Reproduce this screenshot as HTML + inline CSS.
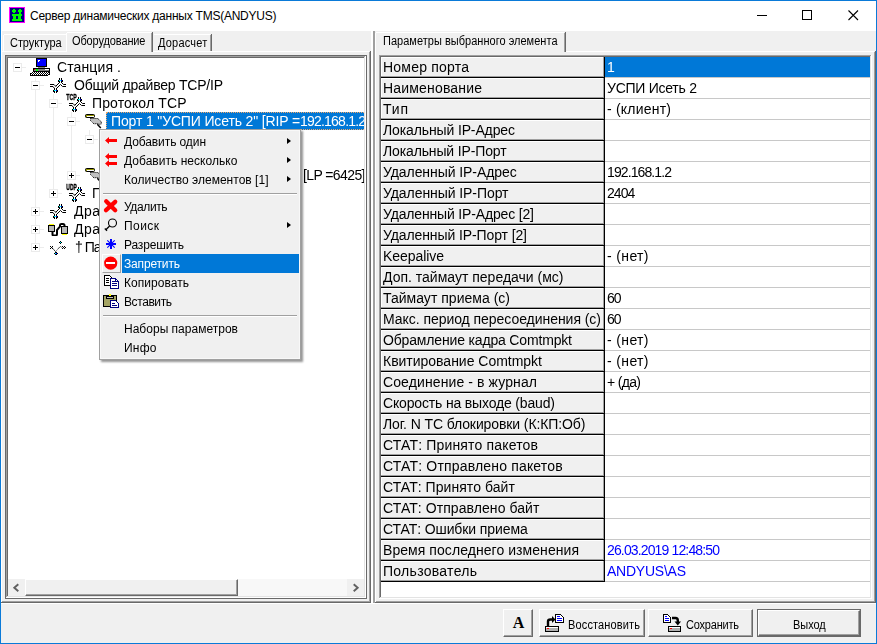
<!DOCTYPE html>
<html lang="ru"><head><meta charset="utf-8"><title>Сервер динамических данных TMS(ANDYUS)</title>
<style>
*{box-sizing:border-box;margin:0;padding:0}
html,body{width:877px;height:644px;overflow:hidden;background:#f0f0f0}
body{position:relative;font-family:"Liberation Sans",sans-serif;font-size:14px;color:#000}
#win, #win div, #win svg, #win span.a{position:absolute}
#win{left:0;top:0;width:877px;height:644px;background:#f0f0f0;overflow:hidden}
#frame{left:0;top:0;width:877px;height:644px;border:1px solid #0a7ad8;z-index:50}
#title{left:1px;top:1px;width:875px;height:30px;background:#fff}
#title .t{left:29px;top:7px;font-size:12px;line-height:16px;white-space:nowrap}
.v{background:#696969}.g{background:#a0a0a0}.w{background:#fff}.l{background:#e3e3e3}
/* tabs */
.tab{font-size:11px;line-height:13px;white-space:nowrap;height:13px}
.tab span{will-change:transform;display:inline-block;transform:scaleY(1.15);transform-origin:0 100%}
/* tree */
.tr{will-change:transform;font-size:14px;line-height:18px;height:18px;white-space:nowrap}
.pm{width:9px;height:9px;border:1px solid #ebebeb;background:#fff}
.pm i{position:absolute;left:1px;top:3px;width:5px;height:1px;background:#000}
.pm b{position:absolute;left:3px;top:1px;width:1px;height:5px;background:#000}
.ln{background:#ececec}
/* grid */
.nc{left:381px;width:224px;height:21px;white-space:nowrap;overflow:hidden;background:linear-gradient(#000,#000) right/1px 100% no-repeat,linear-gradient(#000,#000) bottom/100% 1px no-repeat,linear-gradient(#a0a0a0,#a0a0a0) right 1px top 0/1px calc(100% - 1px) no-repeat,linear-gradient(#a0a0a0,#a0a0a0) left 0 bottom 1px/calc(100% - 1px) 1px no-repeat,linear-gradient(#fff,#fff) top/100% 1px no-repeat,linear-gradient(#fff,#fff) left/1px 100% no-repeat,#f0f0f0}
.nc span{will-change:transform;position:absolute;left:2px;top:0;line-height:20px}
.vc{left:605px;width:265px;height:21px;background:#fff;border-bottom:1px solid #c8c8c8;white-space:nowrap;overflow:hidden}
.vc span{will-change:transform;position:absolute;left:2px;top:0;line-height:20px}
.vc.sel{background:#0078d7;color:#fff}
.vc.bl{color:#0000ff}
/* menu */
#menu{left:99px;top:129px;width:202px;height:231px;background:#f0f0f0;border:1px solid #a0a0a0;box-shadow:2px 2px 2px rgba(0,0,0,.42),inset 0 0 0 1px #f8f8f8;font-size:12px}
.mi{left:24px;height:19px;line-height:21px;white-space:nowrap}
.sep{left:3px;width:194px;height:2px;background:#a0a0a0;border-bottom:1px solid #fff}
.arr{left:187px;width:0;height:0;border-left:4px solid #000;border-top:3.5px solid transparent;border-bottom:3.5px solid transparent;margin-top:-0.5px}
/* buttons */
.btn{top:609px;height:28px;background:#f0f0f0;border-top:1px solid #fff;border-left:1px solid #fff;border-right:1px solid #696969;border-bottom:1px solid #696969;font-size:11px;line-height:13px;white-space:nowrap}
.btn:after{content:"";position:absolute;right:0;bottom:0;left:0;top:0;border-right:1px solid #a0a0a0;border-bottom:1px solid #a0a0a0}
.btn>span{will-change:transform;position:absolute;top:9px;display:inline-block;transform:scaleY(1.15);transform-origin:0 100%}
</style></head><body>
<div id="win">
<div id="title"><div class="t"><span style="letter-spacing:-0.239px">Сервер динамических данных TMS(ANDYUS)</span></div>
<svg style="left:8px;top:6px" width="16" height="16" viewBox="0 0 16 16" shape-rendering="crispEdges"><rect width="16" height="16" fill="#ff00ff"/><rect x="1" y="1" width="14" height="14" fill="#000080"/><path d="M4 2h2v4h-2zM3 3h4v2h-4zM10 2h2v4h-2zM9 3h4v2h-4zM10 6h2v1h-2zM3 7h10v2h-10zM4 9h3v3h-3zM9 9h3v3h-3zM3 12h10v2h-10z" fill="#00ff00"/></svg>
<svg style="left:756px;top:9px" width="110" height="12" viewBox="0 0 110 12"><path d="M0 5.5h10M45.5 0.5h9v9h-9z" stroke="#000" stroke-width="1" fill="none" shape-rendering="crispEdges"/><path d="M91.5 0.5l9.5 9.5M101 0.5l-9.5 9.5" stroke="#000" stroke-width="1.1" fill="none"/></svg>
</div>

<!-- left tab control -->
<div class="w" style="left:1px;top:31px;width:1px;height:572px"></div>
<div class="w" style="left:2px;top:51px;width:367px;height:1px"></div>
<div class="g" style="left:369px;top:52px;width:1px;height:550px"></div>
<div class="v" style="left:370px;top:51px;width:1px;height:552px"></div>
<div class="g" style="left:2px;top:601px;width:368px;height:1px"></div>
<div class="v" style="left:1px;top:602px;width:370px;height:1px"></div>
<!-- tabs -->
<div class="w" style="left:3px;top:35px;width:1px;height:16px"></div>
<div class="w" style="left:4px;top:34px;width:62px;height:1px"></div>
<div class="tab" style="left:9.5px;top:37px"><span style="letter-spacing:-0.061px">Структура</span></div>
<div class="w" style="left:154px;top:34px;width:56px;height:1px"></div>
<div class="g" style="left:210px;top:35px;width:1px;height:16px"></div>
<div class="v" style="left:211px;top:34px;width:1px;height:17px"></div>
<div class="tab" style="left:158px;top:37px"><span style="letter-spacing:0.196px">Дорасчет</span></div>
<div style="left:66px;top:32px;width:87px;height:20px;background:#f0f0f0"></div>
<div class="w" style="left:66px;top:33px;width:1px;height:19px"></div>
<div class="w" style="left:67px;top:32px;width:84px;height:1px"></div>
<div class="g" style="left:151px;top:33px;width:1px;height:19px"></div>
<div class="v" style="left:152px;top:32px;width:1px;height:20px"></div>
<div class="tab" style="left:72px;top:34.5px"><span style="letter-spacing:-0.121px">Оборудование</span></div>

<!-- tree frame -->
<div style="left:5px;top:55px;width:362px;height:544px;border:1px solid #696969;background:#fff"></div>
<div class="g" style="left:6px;top:56px;width:359px;height:1px"></div>
<div class="g" style="left:6px;top:56px;width:1px;height:541px"></div>
<div class="v" style="left:7px;top:57px;width:357px;height:1px"></div>
<div class="v" style="left:7px;top:57px;width:1px;height:539px"></div>
<div class="l" style="left:364px;top:57px;width:1px;height:540px"></div>
<div class="l" style="left:7px;top:596px;width:358px;height:1px"></div>
<!-- tree content (clipped) -->
<div id="tree" style="left:0;top:0;width:364px;height:579px;overflow:hidden">
<div class="ln" style="left:35px;top:77px;width:1px;height:171px"></div>
<div class="ln" style="left:53px;top:94px;width:1px;height:100px"></div>
<div class="ln" style="left:71px;top:112px;width:1px;height:64px"></div>
<div class="ln" style="left:89px;top:130px;width:1px;height:10px"></div>
<div class="pm" style="left:13px;top:63px"><i></i></div><div class="ln" style="left:22px;top:67px;width:4px;height:1px"></div>
<svg style="left:30px;top:58px" width="20" height="18" viewBox="0 0 20 18" shape-rendering="crispEdges"><rect x="6" y="0" width="11" height="9" fill="#000"/><rect x="7" y="1" width="9" height="7" fill="#0000ff"/><path d="M8 2h2v1h-1v1h-1z" fill="#fff"/><rect x="8" y="9" width="7" height="1" fill="#808080"/><rect x="3" y="10" width="17" height="4" fill="#000"/><rect x="4" y="11" width="15" height="2" fill="#808080"/><rect x="4" y="11" width="1" height="1" fill="#ff0000"/><rect x="6" y="11" width="2" height="2" fill="#00ff00"/><rect x="15" y="11" width="4" height="1" fill="#fff"/><rect x="0" y="14" width="20" height="4" fill="#000"/><path d="M2 15h1v1h-1zM4 15h1v1h-1zM6 15h1v1h-1zM8 15h1v1h-1zM10 15h1v1h-1zM12 15h1v1h-1zM14 15h1v1h-1zM16 15h1v1h-1zM18 15h1v1h-1zM1 16h1v1h-1zM3 16h1v1h-1zM5 16h1v1h-1zM7 16h1v1h-1zM9 16h1v1h-1zM11 16h1v1h-1zM13 16h1v1h-1zM15 16h1v1h-1zM17 16h1v1h-1zM3 14h1v1h-1zM5 14h1v1h-1zM7 14h1v1h-1zM9 14h1v1h-1zM11 14h1v1h-1zM13 14h1v1h-1zM15 14h1v1h-1zM17 14h1v1h-1z" fill="#fff"/><path d="M0 14h2v1h-2zM18 17h2v1h-2z" fill="#fff"/></svg>
<div class="tr" style="left:56.8px;top:58px;"><span style="letter-spacing:0.113px">Станция .</span></div>
<div class="pm" style="left:31px;top:81px"><i></i></div><div class="ln" style="left:40px;top:85px;width:4px;height:1px"></div>
<svg style="left:50px;top:78px" width="16" height="16" viewBox="0 0 16 16"><path d="M0 6.5H4L6 8.5M0 8.5H3L4.5 10.5M5.5 8.5L9.5 4.5M6.5 10.5L10.5 6.5L12.5 8.5H16M12 5L13.5 6.5H16" stroke="#000" stroke-width="1" fill="none"/><g shape-rendering="crispEdges"><path d="M9 0h1v5h-1zM11 0h1v5h-1zM8 2h1v2h-1zM12 2h1v2h-1zM4 10h1v5h-1zM6 10h1v5h-1zM3 12h1v2h-1zM7 12h1v2h-1z" fill="#000"/><rect x="9" y="2" width="2" height="1" fill="#00ffff"/><rect x="11" y="2" width="1" height="1" fill="#0000ff"/><rect x="4" y="12" width="2" height="1" fill="#00ffff"/><rect x="6" y="12" width="1" height="1" fill="#0000ff"/></g></svg>
<div class="tr" style="left:74.3px;top:76px;"><span style="letter-spacing:-0.231px">Общий драйвер TCP/IP</span></div>
<div class="pm" style="left:49px;top:99px"><i></i></div><div class="ln" style="left:58px;top:103px;width:4px;height:1px"></div>
<svg style="left:69px;top:97px" width="16" height="16" viewBox="0 0 16 16"><path d="M0 6.5H4L6 8.5M0 8.5H3L4.5 10.5M5.5 8.5L9.5 4.5M6.5 10.5L10.5 6.5L12.5 8.5H16M12 5L13.5 6.5H16" stroke="#000" stroke-width="1" fill="none"/><g shape-rendering="crispEdges"><path d="M9 0h1v5h-1zM11 0h1v5h-1zM8 2h1v2h-1zM12 2h1v2h-1zM4 10h1v5h-1zM6 10h1v5h-1zM3 12h1v2h-1zM7 12h1v2h-1z" fill="#000"/><rect x="9" y="2" width="2" height="1" fill="#00ffff"/><rect x="11" y="2" width="1" height="1" fill="#0000ff"/><rect x="4" y="12" width="2" height="1" fill="#00ffff"/><rect x="6" y="12" width="1" height="1" fill="#0000ff"/></g></svg>
<svg style="left:66px;top:93px" width="12" height="8" viewBox="0 0 12 8"><text x="0.3" y="6.6" font-family="Liberation Sans, sans-serif" font-weight="bold" font-size="8.6" textLength="10.5" lengthAdjust="spacingAndGlyphs" fill="#000" stroke="#000" stroke-width="0.35">TCP</text></svg>
<div class="tr" style="left:92px;top:94px;"><span style="letter-spacing:0.119px">Протокол TCP</span></div>
<div class="pm" style="left:67px;top:117px"><i></i></div><div class="ln" style="left:76px;top:121px;width:4px;height:1px"></div>
<svg style="left:84px;top:112px" width="19" height="17" viewBox="0 0 19 17"><rect x="1.5" y="2.5" width="9" height="3" rx="1" fill="#989800" stroke="#000"/><path d="M3 4.5H10" stroke="#fff" shape-rendering="crispEdges"/><path d="M6.5 6.5H13.8L17.3 9.8V12L15.5 12.3L12.5 11.5L10 12L6.500 8.500Z" fill="#c0c0c0" stroke="#000" stroke-width="1" stroke-dasharray="1.1 0.9"/><path d="M13.3 12.3L16.800 16" stroke="#000" stroke-width="1.5"/></svg>
<div style="left:106px;top:112px;width:270px;height:18px;background:#0078d7;border:1px dotted #f0a868"></div>
<div class="tr" style="left:110.5px;top:112px;color:#fff"><span style="letter-spacing:-0.142px">Порт 1 &quot;УСПИ Исеть 2&quot; [RIP =</span><span style="letter-spacing:-0.78px">192.168.1.2]</span></div>
<div class="pm" style="left:85px;top:135px"><i></i></div><div class="ln" style="left:94px;top:139px;width:4px;height:1px"></div>
<div class="pm" style="left:67px;top:171px"><i></i><b></b></div><div class="ln" style="left:76px;top:175px;width:4px;height:1px"></div>
<svg style="left:84px;top:166px" width="19" height="17" viewBox="0 0 19 17"><rect x="1.5" y="2.5" width="9" height="3" rx="1" fill="#989800" stroke="#000"/><path d="M3 4.5H10" stroke="#fff" shape-rendering="crispEdges"/><path d="M6.5 6.5H13.8L17.3 9.8V12L15.5 12.3L12.5 11.5L10 12L6.500 8.500Z" fill="#c0c0c0" stroke="#000" stroke-width="1" stroke-dasharray="1.1 0.9"/><path d="M13.3 12.3L16.800 16" stroke="#000" stroke-width="1.5"/></svg>
<div class="tr" style="left:302.5px;top:166px;"><span style="letter-spacing:-0.597px">[LP =6425]</span></div>
<div class="pm" style="left:49px;top:189px"><i></i><b></b></div><div class="ln" style="left:58px;top:193px;width:4px;height:1px"></div>
<svg style="left:69px;top:187px" width="16" height="16" viewBox="0 0 16 16"><path d="M0 6.5H4L6 8.5M0 8.5H3L4.5 10.5M5.5 8.5L9.5 4.5M6.5 10.5L10.5 6.5L12.5 8.5H16M12 5L13.5 6.5H16" stroke="#000" stroke-width="1" fill="none"/><g shape-rendering="crispEdges"><path d="M9 0h1v5h-1zM11 0h1v5h-1zM8 2h1v2h-1zM12 2h1v2h-1zM4 10h1v5h-1zM6 10h1v5h-1zM3 12h1v2h-1zM7 12h1v2h-1z" fill="#000"/><rect x="9" y="2" width="2" height="1" fill="#00ffff"/><rect x="11" y="2" width="1" height="1" fill="#0000ff"/><rect x="4" y="12" width="2" height="1" fill="#00ffff"/><rect x="6" y="12" width="1" height="1" fill="#0000ff"/></g></svg>
<svg style="left:66px;top:183px" width="12" height="8" viewBox="0 0 12 8"><text x="0.3" y="6.6" font-family="Liberation Sans, sans-serif" font-weight="bold" font-size="8.6" textLength="10.5" lengthAdjust="spacingAndGlyphs" fill="#000" stroke="#000" stroke-width="0.35">UDP</text></svg>
<div class="tr" style="left:92px;top:184px;"><span style="letter-spacing:-0.062px">П</span></div>
<div class="pm" style="left:31px;top:207px"><i></i><b></b></div><div class="ln" style="left:40px;top:211px;width:4px;height:1px"></div>
<svg style="left:50px;top:204px" width="16" height="16" viewBox="0 0 16 16"><path d="M0 6.5H4L6 8.5M0 8.5H3L4.5 10.5M5.5 8.5L9.5 4.5M6.5 10.5L10.5 6.5L12.5 8.5H16M12 5L13.5 6.5H16" stroke="#000" stroke-width="1" fill="none"/><g shape-rendering="crispEdges"><path d="M9 0h1v5h-1zM11 0h1v5h-1zM8 2h1v2h-1zM12 2h1v2h-1zM4 10h1v5h-1zM6 10h1v5h-1zM3 12h1v2h-1zM7 12h1v2h-1z" fill="#000"/><rect x="9" y="2" width="2" height="1" fill="#00ffff"/><rect x="11" y="2" width="1" height="1" fill="#0000ff"/><rect x="4" y="12" width="2" height="1" fill="#00ffff"/><rect x="6" y="12" width="1" height="1" fill="#0000ff"/></g></svg>
<div class="tr" style="left:74px;top:202px;"><span style="letter-spacing:0.469px">Дра</span></div>
<div class="pm" style="left:31px;top:225px"><i></i><b></b></div><div class="ln" style="left:40px;top:229px;width:4px;height:1px"></div>
<svg style="left:48px;top:223px" width="20" height="13" viewBox="0 0 20 13"><path d="M4.5 8V11.5Q4.5 12.5 6 12.5H7.5Q9 12.5 9 11V7L12 3.5V2Q12 1 13.5 1H15Q16.5 1 16.5 2.5V4" stroke="#000" stroke-width="2" fill="none"/><g shape-rendering="crispEdges"><rect x="1" y="1" width="5" height="1" fill="#ffff00"/><rect x="0" y="2" width="7" height="7" fill="#000"/><rect x="1" y="3" width="5" height="5" fill="#b8b8b8"/><rect x="13" y="3" width="7" height="8" fill="#000"/><rect x="14" y="4" width="5" height="6" fill="#b8b8b8"/><rect x="14" y="11" width="5" height="1" fill="#ffff00"/></g></svg>
<div class="tr" style="left:74px;top:220px;"><span style="letter-spacing:0.469px">Дра</span></div>
<div class="pm" style="left:31px;top:243px"><i></i><b></b></div><div class="ln" style="left:40px;top:247px;width:4px;height:1px"></div>
<svg style="left:49px;top:240px" width="18" height="16" viewBox="0 0 18 16"><path d="M3 7.5L6.5 11.7L11.4 6.3L13.8 8.7" stroke="#000" stroke-width="1" stroke-dasharray="1 0.8" fill="none"/><g shape-rendering="crispEdges" fill="#000"><path d="M1 6h1v1h-1zM3 6h1v1h-1zM2 7h1v1h-1zM1 8h1v1h-1zM3 8h1v1h-1zM13 6h1v1h-1zM15 6h1v1h-1zM14 7h1v1h-1zM16 7h1v1h-1zM13 8h1v1h-1zM15 8h1v1h-1zM11 1h1v1h-1zM10 2h1v1h-1zM12 2h1v1h-1zM11 3h1v1h-1zM6 12h1v1h-1zM5 13h1v1h-1zM8 13h1v1h-1zM6 14h1v1h-1zM7 12h1v1h-1zM7 14h1v1h-1z"/><rect x="11" y="2" width="1" height="1" fill="#00ffff"/><rect x="6" y="13" width="1" height="1" fill="#00ffff"/><rect x="7" y="13" width="1" height="1" fill="#0000ff"/></g></svg>
<div class="tr" style="left:75px;top:238px;"><span style="letter-spacing:-1.0px">† Па</span></div>
</div>
<!-- h scrollbar -->
<div style="left:8px;top:579px;width:356px;height:17px;background:#f0f0f0"></div>
<div style="left:238px;top:579px;width:109px;height:17px;background:#f8f8f8"></div>
<div style="left:25px;top:579px;width:213px;height:17px;background:#f0f0f0;border-top:1px solid #fff;border-left:1px solid #fff;border-right:1px solid #696969;border-bottom:1px solid #696969"></div>
<div class="g" style="left:26px;top:594px;width:211px;height:1px"></div>
<div class="g" style="left:236px;top:580px;width:1px;height:15px"></div>
<svg style="left:12px;top:583px" width="8" height="10" viewBox="0 0 8 10"><path d="M6.3 1.3L2.300 4.800l4 3.500" stroke="#606060" stroke-width="1.9" fill="none"/></svg>
<svg style="left:352px;top:583px" width="8" height="10" viewBox="0 0 8 10"><path d="M1.700 1.300L5.700 4.800l-4 3.500" stroke="#606060" stroke-width="1.9" fill="none"/></svg>

<!-- splitter -->
<div class="w" style="left:371px;top:31px;width:2px;height:572px"></div>
<div class="g" style="left:373px;top:31px;width:2px;height:572px"></div>
<!-- right tab control -->
<div class="w" style="left:375px;top:33px;width:1px;height:570px"></div>
<div class="w" style="left:376px;top:51px;width:498px;height:1px"></div>
<div class="g" style="left:874px;top:52px;width:1px;height:550px"></div>
<div class="v" style="left:875px;top:51px;width:1px;height:552px"></div>
<div class="g" style="left:376px;top:601px;width:499px;height:1px"></div>
<div class="v" style="left:375px;top:602px;width:501px;height:1px"></div>
<div style="left:376px;top:32px;width:190px;height:20px;background:#f0f0f0"></div>
<div class="w" style="left:376px;top:32px;width:188px;height:1px"></div>
<div class="g" style="left:564px;top:33px;width:1px;height:19px"></div>
<div class="v" style="left:565px;top:32px;width:1px;height:20px"></div>
<div class="tab" style="left:382.7px;top:34.5px"><span style="letter-spacing:0.022px">Параметры выбранного элемента</span></div>
<!-- grid frame -->
<div style="left:379px;top:55px;width:493px;height:544px;background:#fff"></div>
<div class="g" style="left:379px;top:55px;width:492px;height:1px"></div>
<div class="g" style="left:379px;top:55px;width:1px;height:543px"></div>
<div class="v" style="left:380px;top:56px;width:490px;height:1px"></div>
<div class="v" style="left:380px;top:56px;width:1px;height:541px"></div>
<div class="l" style="left:870px;top:56px;width:1px;height:542px"></div>
<div class="l" style="left:380px;top:597px;width:491px;height:1px"></div>
<div class="nc" style="top:57px"><span style="letter-spacing:0.212px">Номер порта</span></div>
<div class="vc sel" style="top:57px"><span style="letter-spacing:-1.0px">1</span></div>
<div class="nc" style="top:78px"><span style="letter-spacing:0.176px">Наименование</span></div>
<div class="vc" style="top:78px"><span style="letter-spacing:-0.254px">УСПИ Исеть 2</span></div>
<div class="nc" style="top:99px"><span style="letter-spacing:0.828px">Тип</span></div>
<div class="vc" style="top:99px"><span style="letter-spacing:0.214px">- (клиент)</span></div>
<div class="nc" style="top:120px"><span style="letter-spacing:-0.126px">Локальный IP-Адрес</span></div>
<div class="vc" style="top:120px"></div>
<div class="nc" style="top:141px"><span style="letter-spacing:-0.137px">Локальный IP-Порт</span></div>
<div class="vc" style="top:141px"></div>
<div class="nc" style="top:162px"><span style="letter-spacing:-0.072px">Удаленный IP-Адрес</span></div>
<div class="vc" style="top:162px"><span style="letter-spacing:-0.897px">192.168.1.2</span></div>
<div class="nc" style="top:183px"><span style="letter-spacing:-0.067px">Удаленный IP-Порт</span></div>
<div class="vc" style="top:183px"><span style="letter-spacing:-0.919px">2404</span></div>
<div class="nc" style="top:204px"><span style="letter-spacing:-0.161px">Удаленный IP-Адрес [2]</span></div>
<div class="vc" style="top:204px"></div>
<div class="nc" style="top:225px"><span style="letter-spacing:-0.102px">Удаленный IP-Порт [2]</span></div>
<div class="vc" style="top:225px"></div>
<div class="nc" style="top:246px"><span style="letter-spacing:-0.062px">Keepalive</span></div>
<div class="vc" style="top:246px"><span style="letter-spacing:0.359px">- (нет)</span></div>
<div class="nc" style="top:267px"><span style="letter-spacing:0.003px">Доп. таймаут передачи (мс)</span></div>
<div class="vc" style="top:267px"></div>
<div class="nc" style="top:288px"><span style="letter-spacing:0.018px">Таймаут приема (с)</span></div>
<div class="vc" style="top:288px"><span style="letter-spacing:-1.0px">60</span></div>
<div class="nc" style="top:309px"><span style="letter-spacing:-0.047px">Макс. период пересоединения (с)</span></div>
<div class="vc" style="top:309px"><span style="letter-spacing:-1.0px">60</span></div>
<div class="nc" style="top:330px"><span style="letter-spacing:-0.164px">Обрамление кадра Comtmpkt</span></div>
<div class="vc" style="top:330px"><span style="letter-spacing:0.359px">- (нет)</span></div>
<div class="nc" style="top:351px"><span style="letter-spacing:-0.016px">Квитирование Comtmpkt</span></div>
<div class="vc" style="top:351px"><span style="letter-spacing:0.359px">- (нет)</span></div>
<div class="nc" style="top:372px"><span style="letter-spacing:0.109px">Соединение - в журнал</span></div>
<div class="vc" style="top:372px"><span style="letter-spacing:-0.672px">+ (да)</span></div>
<div class="nc" style="top:393px"><span style="letter-spacing:-0.162px">Скорость на выходе (baud)</span></div>
<div class="vc" style="top:393px"></div>
<div class="nc" style="top:414px"><span style="letter-spacing:-0.103px">Лог. N ТС блокировки (К:КП:Об)</span></div>
<div class="vc" style="top:414px"></div>
<div class="nc" style="top:435px"><span style="letter-spacing:0.166px">СТАТ: Принято пакетов</span></div>
<div class="vc" style="top:435px"></div>
<div class="nc" style="top:456px"><span style="letter-spacing:0.174px">СТАТ: Отправлено пакетов</span></div>
<div class="vc" style="top:456px"></div>
<div class="nc" style="top:477px"><span style="letter-spacing:0.051px">СТАТ: Принято байт</span></div>
<div class="vc" style="top:477px"></div>
<div class="nc" style="top:498px"><span style="letter-spacing:0.072px">СТАТ: Отправлено байт</span></div>
<div class="vc" style="top:498px"></div>
<div class="nc" style="top:519px"><span style="letter-spacing:-0.1px">СТАТ: Ошибки приема</span></div>
<div class="vc" style="top:519px"></div>
<div class="nc" style="top:540px"><span style="letter-spacing:0.061px">Время последнего изменения</span></div>
<div class="vc bl" style="top:540px"><span style="letter-spacing:-0.859px">26.03.2019 12:48:50</span></div>
<div class="nc" style="top:561px"><span style="letter-spacing:0.286px">Пользователь</span></div>
<div class="vc bl" style="top:561px"><span style="letter-spacing:-0.24px">ANDYUS\AS</span></div>

<div class="w" style="left:1px;top:603px;width:875px;height:1px"></div>
<!-- buttons -->
<div class="btn" style="left:503px;width:30px"></div>
<div style="left:503px;top:609px;width:30px;height:28px;text-align:center;font-family:'Liberation Serif',serif;font-weight:bold;font-size:16px;line-height:27px;padding-left:1px">A</div>
<div class="btn" style="left:539px;width:106px"><span style="left:28px"><span style="letter-spacing:0.142px">Восстановить</span></span></div>
<div class="btn" style="left:648px;width:105px"><span style="left:37px"><span style="letter-spacing:-0.209px">Сохранить</span></span></div>
<div style="left:757px;top:609px;width:104px;height:28px;background:#696969"></div>
<div class="btn" style="left:758px;top:610px;width:102px;height:26px"><span style="left:33.5px;top:8px"><span style="letter-spacing:-0.055px">Выход</span></span></div>
<svg style="left:540px;top:610px" width="150" height="26" viewBox="540 610 150 26">
<path d="M548 626V621.500Q548 619.500 550.500 619.500H553" stroke="#000" stroke-width="2.4" fill="none"/><path d="M552 616L555.500 619.500L552 623Z" fill="#000"/>
<g shape-rendering="crispEdges"><path d="M555.500 614.500H560.500L563.500 617.500V622.500H555.500Z" fill="#fff" stroke="#000"/><path d="M557 616.500H560M557 618.500H562M557 620.500H562" stroke="#0000ff"/>
<rect x="545.500" y="626.500" width="13" height="5" fill="#b0b0b0" stroke="#000"/><path d="M546 627.500H558" stroke="#fff"/><path d="M547 628.500H549" stroke="#ff0000"/>
<path d="M663.500 614.500H667.500L670.500 617.500V622.500H663.500Z" fill="#fff" stroke="#000"/><path d="M665 616.500H667M665 618.500H669M665 620.500H669" stroke="#0000ff"/>
<rect x="668.500" y="626.500" width="12" height="5" fill="#b0b0b0" stroke="#000"/><path d="M669 627.500H680" stroke="#fff"/><path d="M670 628.500H672" stroke="#ff0000"/></g>
<path d="M672 618H675.500Q677.800 618 677.800 620.500V622" stroke="#000" stroke-width="2.4" fill="none"/><path d="M674.500 621.500H681L677.800 625.500Z" fill="#000"/>
</svg>

<!-- context menu -->
<div id="menu">
<div class="mi" style="top:2px"><span style="letter-spacing:-0.092px">Добавить один</span></div><div class="arr" style="top:8px"></div>
<div class="mi" style="top:21px"><span style="letter-spacing:0.036px">Добавить несколько</span></div><div class="arr" style="top:27px"></div>
<div class="mi" style="top:40px"><span style="letter-spacing:0.024px">Количество элементов [1]</span></div><div class="arr" style="top:46px"></div>
<div class="sep" style="top:63px"></div>
<div class="mi" style="top:67px"><span style="letter-spacing:-0.371px">Удалить</span></div>
<div class="mi" style="top:86px"><span style="letter-spacing:0.434px">Поиск</span></div><div class="arr" style="top:92px"></div>
<div class="mi" style="top:105px"><span style="letter-spacing:-0.135px">Разрешить</span></div>
<div style="left:2px;top:124px;width:19px;height:19px;border-top:1px solid #fff;border-left:1px solid #fff;border-right:1px solid #a0a0a0;border-bottom:1px solid #a0a0a0"></div>
<div style="left:22px;top:124px;width:177px;height:19px;background:#0078d7"></div>
<div class="mi" style="top:124px;color:#fff"><span style="letter-spacing:-0.166px">Запретить</span></div>
<div class="mi" style="top:143px"><span style="letter-spacing:0.042px">Копировать</span></div>
<div class="mi" style="top:162px"><span style="letter-spacing:-0.411px">Вставить</span></div>
<div class="sep" style="top:185px"></div>
<div class="mi" style="top:189px"><span style="letter-spacing:0.013px">Наборы параметров</span></div>
<div class="mi" style="top:208px"><span style="letter-spacing:0.196px">Инфо</span></div>
<svg style="left:0;top:0;z-index:3" width="22" height="229" viewBox="100 130 22 229">
<g fill="#ff0000"><path d="M105 140.5L109 137V139H117V142H109V144Z"/><path d="M105 156.5L109 153V155H117V158H109V160Z"/><path d="M105 163.5L109 160V162H117V165H109V167Z"/></g>
<path d="M106.2 201.2L115.2 210.2M115.2 201.800L106 210.2" stroke="#ff0000" stroke-width="4.3" stroke-linecap="round" fill="none"/>
<circle cx="112.5" cy="223" r="4" fill="none" stroke="#000" stroke-width="1.1"/><path d="M109.6 226L105.6 230M104.8 228.5L107 230.8" stroke="#000" stroke-width="1.3" fill="none"/>
<g stroke="#0000ff" fill="none"><path d="M111 239V249M106 244H116" stroke-width="2" shape-rendering="crispEdges"/><path d="M107.3 240.3L114.7 247.7M114.7 240.3L107.3 247.7" stroke-width="1.1"/></g>
<circle cx="110.7" cy="263.1" r="6.6" fill="#ff0000"/><rect x="106" y="262" width="9" height="2" fill="#fff"/>
<g shape-rendering="crispEdges"><path d="M104.5 275.5H109.5L111.5 277.5V285.5H104.5Z" fill="#fff" stroke="#000"/><path d="M106 278.5H109M106 280.5H109M106 282.5H109" stroke="#000"/><path d="M110.5 278.5H115.5L118.5 281.5V288.5H110.5Z" fill="#fff" stroke="#000080"/><path d="M112 281.5H115M112 283.5H117M112 285.5H117" stroke="#000080"/><path d="M115.5 278.5V281.5H118.5" fill="none" stroke="#000080"/></g>
<g shape-rendering="crispEdges"><rect x="103.5" y="295.5" width="13" height="11" fill="#a4a464" stroke="#000"/><path d="M106.500 296.500H113.500V298.500H106.500Z" fill="#c0c0c0" stroke="#000"/><rect x="109" y="294" width="2" height="2" fill="#ffff00"/><path d="M110.5 300.500H115.500L118.500 303.500V307.500H110.500Z" fill="#fff" stroke="#000080"/><path d="M112 303.500H115M112 305.500H117" stroke="#000080"/></g>
</svg>
</div>
<div id="frame"></div>
</div>
</body></html>
